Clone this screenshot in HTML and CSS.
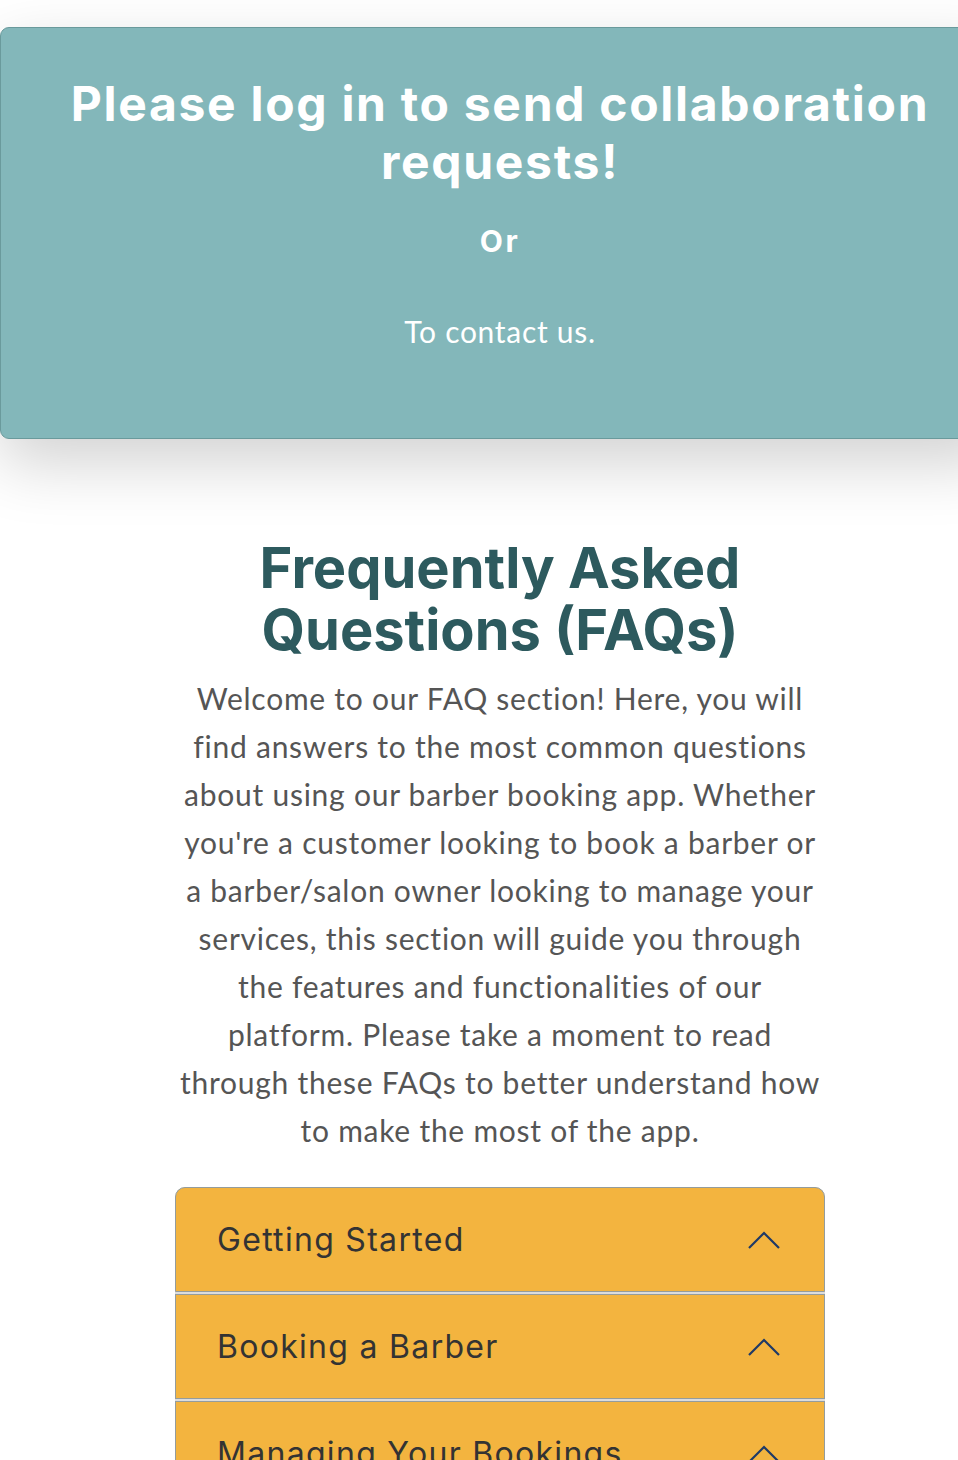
FILE: index.html
```html
<!DOCTYPE html>
<html lang="en">
<head>
<meta charset="utf-8">
<title>FAQ</title>
<link rel="stylesheet" href="styles.css">
</head>
<body>
<div class="page">
  <section class="login-card">
    <h2 class="login-title">Please log in to send collaboration requests!</h2>
    <p class="login-or">Or</p>
    <p class="login-contact">To contact us.</p>
  </section>

  <section class="faq">
    <h1 class="faq-title">Frequently Asked Questions (FAQs)</h1>
    <p class="faq-intro">Welcome to our FAQ section! Here, you will find answers to the most common questions about using our barber booking app. Whether you're a customer looking to book a barber or a barber/salon owner looking to manage your services, this section will guide you through the features and functionalities of our platform. Please take a moment to read through these FAQs to better understand how to make the most of the app.</p>

    <div class="accordion">
      <div class="acc-item">
        <span class="acc-label">Getting Started</span>
        <svg class="acc-chevron" viewBox="0 0 32 18" width="32" height="18"><path d="M1 17 L16 2 L31 17" fill="none" stroke="#1f3a66" stroke-width="2.2"/></svg>
      </div>
      <div class="acc-item">
        <span class="acc-label">Booking a Barber</span>
        <svg class="acc-chevron" viewBox="0 0 32 18" width="32" height="18"><path d="M1 17 L16 2 L31 17" fill="none" stroke="#1f3a66" stroke-width="2.2"/></svg>
      </div>
      <div class="acc-item">
        <span class="acc-label">Managing Your Bookings</span>
        <svg class="acc-chevron" viewBox="0 0 32 18" width="32" height="18"><path d="M1 17 L16 2 L31 17" fill="none" stroke="#1f3a66" stroke-width="2.2"/></svg>
      </div>
    </div>
  </section>
</div>
</body>
</html>
```

FILE: styles.css
```css
html, body {
  margin: 0;
  padding: 0;
  overflow: hidden;
  background: #ffffff;
}

.page {
  width: 1000px;
  padding-top: 27px;
  font-family: "Lato", "Liberation Sans", sans-serif;
}

.login-card {
  background: #83b7ba;
  border: 1px solid #6a9a9c;
  border-radius: 9px;
  box-shadow: 0 24px 64px rgba(0, 0, 0, 0.18);
  padding: 47px 20px 83px;
  text-align: center;
  color: #ffffff;
}

.login-title {
  margin: 0;
  font-family: "Inter", "Noto Sans", sans-serif;
  font-weight: 700;
  font-size: 48px;
  line-height: 57.6px;
  letter-spacing: 1.7px;
}

.login-or {
  margin: 33px 0 0;
  font-family: "Inter", "Noto Sans", sans-serif;
  font-weight: 700;
  font-size: 30px;
  line-height: 36px;
  letter-spacing: 2.5px;
}

.login-contact {
  margin: 48px 0 0;
  font-size: 30px;
  line-height: 48px;
  letter-spacing: 0.7px;
}

.faq {
  width: 650px;
  margin: 99px auto 0;
  text-align: center;
}

.faq-title {
  margin: 0;
  font-family: "Inter", "Noto Sans", sans-serif;
  font-weight: 700;
  font-size: 56px;
  line-height: 61.6px;
  color: #2d5a5e;
  padding: 0 80px;
}

.faq-intro {
  margin: 13px 0 0;
  font-size: 30px;
  line-height: 48px;
  letter-spacing: 0.75px;
  color: #555555;
}

.accordion {
  margin-top: 33px;
  text-align: left;
  display: flex;
  flex-direction: column;
  gap: 2px;
  background: #dcdcdc;
  border-radius: 10px 10px 0 0;
}

.acc-item {
  display: flex;
  align-items: center;
  justify-content: space-between;
  height: 103px;
  padding: 0 44px 0 41px;
  background: #f3b43f;
  border: 1px solid #949c9c;
}

.acc-item:first-child {
  border-radius: 10px 10px 0 0;
}

.acc-label {
  font-family: "Inter", "Noto Sans", sans-serif;
  font-size: 32px;
  letter-spacing: 1.3px;
  color: #333333;
}

.acc-chevron {
  display: block;
}
```
